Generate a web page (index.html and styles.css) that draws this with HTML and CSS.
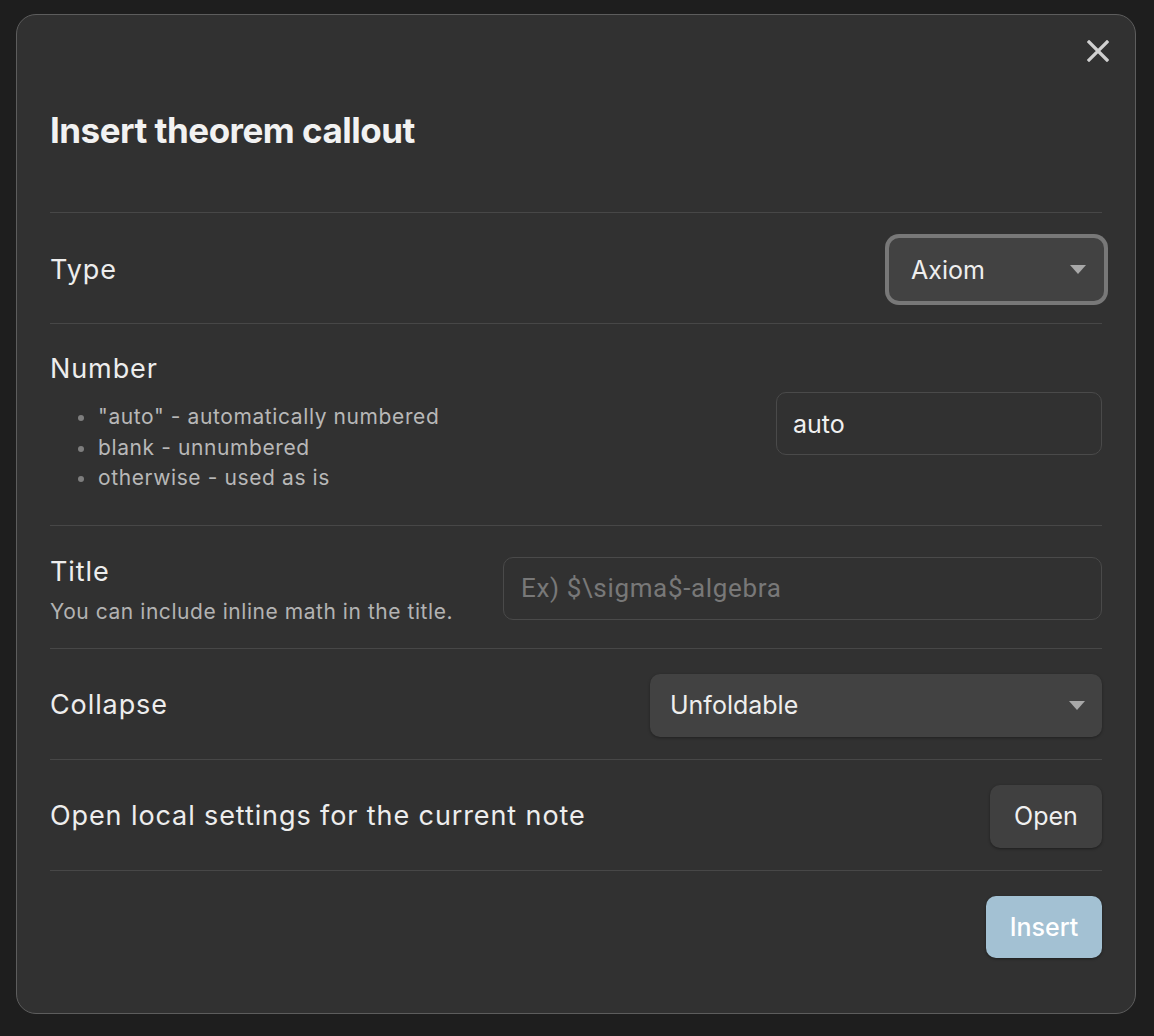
FILE: index.html
```html
<!DOCTYPE html>
<html lang="en">
<head>
<meta charset="utf-8">
<title>Insert theorem callout</title>
<link rel="stylesheet" href="styles.css">
</head>
<body>
<div class="modal">
  <button class="close" aria-label="Close">
    <svg viewBox="0 0 22 22" width="22" height="22"><path d="M2 2 L20 20 M20 2 L2 20" stroke="#d0d0d0" stroke-width="3.2" stroke-linecap="square" fill="none"/></svg>
  </button>
  <h1 class="modal-title">Insert theorem callout</h1>

  <div class="setting">
    <div class="info"><div class="name">Type</div></div>
    <div class="control">
      <div class="select select-focus"><span>Axiom</span><i class="caret"></i></div>
    </div>
  </div>

  <div class="setting setting-number">
    <div class="info">
      <div class="name">Number</div>
      <ul class="desc-list">
        <li>"auto" - automatically numbered</li>
        <li>blank - unnumbered</li>
        <li>otherwise - used as is</li>
      </ul>
    </div>
    <div class="control">
      <div class="input input-auto">auto</div>
    </div>
  </div>

  <div class="setting setting-title">
    <div class="info info-title">
      <div class="name">Title</div>
      <div class="desc">You can include inline math in the title.</div>
    </div>
    <div class="control">
      <div class="input input-title"><span class="placeholder">Ex) $\sigma$-algebra</span></div>
    </div>
  </div>

  <div class="setting">
    <div class="info"><div class="name">Collapse</div></div>
    <div class="control">
      <div class="select select-wide"><span>Unfoldable</span><i class="caret"></i></div>
    </div>
  </div>

  <div class="setting">
    <div class="info"><div class="name">Open local settings for the current note</div></div>
    <div class="control">
      <button class="btn">Open</button>
    </div>
  </div>

  <div class="footer">
    <button class="btn btn-cta">Insert</button>
  </div>
</div>
</body>
</html>
```

FILE: styles.css
```css
* { box-sizing: border-box; }
html, body { margin: 0; padding: 0; }
body {
  background: #1e1e1e;
  width: 1154px;
  height: 1036px;
  overflow: hidden;
  font-family: Inter, "Noto Sans", "Liberation Sans", sans-serif;
  color: #dadada;
  padding: 14px 0 0 16px;
}
.modal {
  position: relative;
  width: 1120px;
  height: 1000px;
  background: #313131;
  border: 1.5px solid #5d5d5d;
  border-radius: 20px;
  padding: 0 33px;
}
.close {
  position: absolute;
  top: 25px;
  right: 26px;
  width: 22px;
  height: 22px;
  padding: 0;
  border: 0;
  background: none;
  display: flex;
}
.modal-title {
  margin: 93px 0 60px;
  font-size: 35px;
  line-height: 44px;
  font-weight: 700;
  color: #f2f2f2;
  letter-spacing: -0.5px;
}
.setting {
  display: flex;
  align-items: center;
  justify-content: space-between;
  border-top: 1px solid #474747;
  padding: 25px 0 22px;
}
.info { flex: 1 1 auto; }
.name {
  font-size: 27px;
  line-height: 30px;
  color: #ededed;
  letter-spacing: 0.9px;
}
.desc {
  margin-top: 10px;
  font-size: 21px;
  line-height: 30px;
  color: #b3b3b3;
  letter-spacing: 0.55px;
}
.setting-number { padding: 30px 0 31px; }
.setting-title { padding: 24px 0 21px; }
.info-title { padding-top: 7px; }
.desc-list {
  margin: 18px 0 0;
  padding: 0 0 0 48px;
  font-size: 21px;
  line-height: 30.5px;
  color: #b8b8b8;
  letter-spacing: 0.6px;
  list-style: none;
}
.desc-list li { position: relative; }
.desc-list li::before {
  content: "";
  position: absolute;
  left: -20px;
  top: 13px;
  width: 6px;
  height: 6px;
  border-radius: 50%;
  background: #7e7e7e;
}
.control { display: flex; justify-content: flex-end; flex: 0 0 auto; }
.select {
  height: 63px;
  border-radius: 10px;
  background: #424242;
  box-shadow: 0 1px 3px rgba(0,0,0,0.35);
  display: flex;
  align-items: center;
  justify-content: space-between;
  font-size: 25px;
  color: #eeeeee;
}
.select-focus {
  width: 215px;
  padding: 0 18px 0 22px;
  margin-right: -2px;
  box-shadow: 0 0 0 4px #787878;
}
.select-wide {
  width: 452px;
  padding: 0 17px 0 20px;
}
.caret {
  width: 0;
  height: 0;
  border-left: 8px solid transparent;
  border-right: 8px solid transparent;
  border-top: 9px solid #a8a8a8;
}
.input {
  height: 63px;
  border: 1.5px solid #4a4a4a;
  border-radius: 10px;
  background: #313131;
  display: flex;
  align-items: center;
  font-size: 25px;
  color: #f0f0f0;
}
.input-auto { width: 326px; padding-left: 16px; }
.input-title { width: 599px; padding-left: 17px; }
.placeholder {
  font-family: Roboto, "Liberation Sans", sans-serif;
  font-size: 26px;
  color: #787878;
  letter-spacing: 0.65px;
}
.btn {
  height: 63px;
  border: 0;
  border-radius: 10px;
  background: #404040;
  box-shadow: 0 1px 3px rgba(0,0,0,0.4);
  color: #f0f0f0;
  font-family: inherit;
  font-size: 25px;
  width: 112px;
  padding: 0;
}
.footer {
  border-top: 1px solid #474747;
  padding-top: 25px;
  display: flex;
  justify-content: flex-end;
}
.btn-cta {
  width: 116px;
  height: 62px;
  background: #a3c1d3;
  color: #ffffff;
  font-weight: 500;
}
```
